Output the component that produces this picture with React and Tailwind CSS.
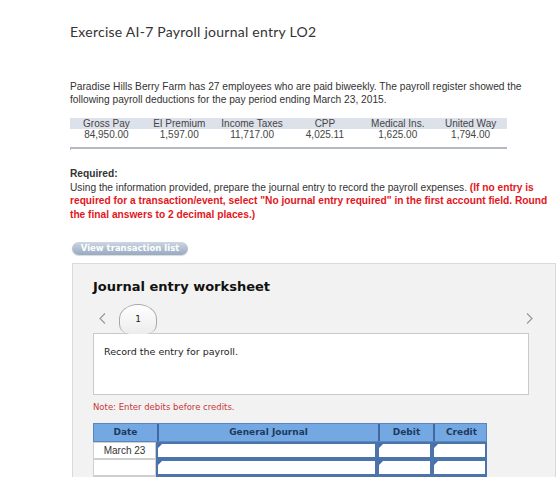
import React from "react";

const deductions = [
  { label: "Gross Pay", amount: "84,950.00" },
  { label: "EI Premium", amount: "1,597.00" },
  { label: "Income Taxes", amount: "11,717.00" },
  { label: "CPP", amount: "4,025.11" },
  { label: "Medical Ins.", amount: "1,625.00" },
  { label: "United Way", amount: "1,794.00" },
];

function InputCell() {
  return (
    <div className="relative bg-white border-2 border-[#4a74aa]">
      <span className="absolute left-0 top-0 w-0 h-0 border-t-[4px] border-t-[#3b6db0] border-r-[4px] border-r-transparent" />
    </div>
  );
}

function JournalRow({ date }) {
  return (
    <div className="grid grid-cols-[63px_221px_55px_55px] h-[17px]">
      <div className="flex items-center justify-center border border-[#cfcfcf] bg-white text-[10px] text-[#333] font-['Liberation_Sans',sans-serif]">
        {date}
      </div>
      <InputCell />
      <InputCell />
      <InputCell />
    </div>
  );
}

function Chevron({ dir }) {
  return (
    <svg width="7" height="11" viewBox="0 0 7 11" fill="none" stroke="#9a9a9a" strokeWidth="1.2">
      {dir === "left" ? <path d="M6 0.5 L1 5.5 L6 10.5" /> : <path d="M1 0.5 L6 5.5 L1 10.5" />}
    </svg>
  );
}

export default function App() {
  return (
    <div className="w-[560px] h-[477px] overflow-hidden bg-white">
      <div className="pl-[70px]">
        <h1 className="pt-[22px] h-[42px] text-[14px] leading-[20px] text-[#333] font-['Lato',sans-serif] tracking-[0.25px]">
          Exercise AI-7 Payroll journal entry LO2
        </h1>

        <p className="mt-[38px] w-[470px] text-[10.2px] leading-[13px] text-[#333] font-['Liberation_Sans',sans-serif]">
          Paradise Hills Berry Farm has 27 employees who are paid biweekly. The payroll register showed the following payroll deductions for the pay period ending March 23, 2015.
        </p>

        {/* payroll register */}
        <div className="mt-[12px] w-[437px] font-['Liberation_Sans',sans-serif] text-[10px] text-[#444]">
          <div className="grid grid-cols-6 bg-[#dde1ea] h-[11px] leading-[11px]">
            {deductions.map((d) => (
              <div key={d.label} className="text-center">{d.label}</div>
            ))}
          </div>
          <div className="grid grid-cols-6 h-[11px] leading-[11px]">
            {deductions.map((d) => (
              <div key={d.label} className="text-center">{d.amount}</div>
            ))}
          </div>
          <div className="mt-[7px] h-[3px] border-t-[2px] border-l border-[#b3b8c2]" />
        </div>

        <div className="mt-[17px] text-[10.2px] leading-[13.5px] text-[#333] font-['Liberation_Sans',sans-serif] w-[484px]">
          <div className="font-bold">Required:</div>
          <p>
            Using the information provided, prepare the journal entry to record the payroll expenses.{" "}
            <span className="font-bold text-[#e3161d]">
              (If no entry is required for a transaction/event, select "No journal entry required" in the first account field. Round the final answers to 2 decimal places.)
            </span>
          </p>
        </div>

        <button className="block mt-[21px] ml-[2px] w-[116px] h-[13px] rounded-full bg-gradient-to-b from-[#cdd6e3] to-[#98a9c1] text-white text-[8.5px] leading-[13px] font-bold font-['DejaVu_Sans',sans-serif] shadow-[0_1px_1px_rgba(0,0,0,0.15)]">
          View transaction list
        </button>

        {/* worksheet panel */}
        <div className="mt-[8px] ml-[2px] w-[484px] h-[230px] bg-[#f2f2f2] border border-[#dadada] pl-[20px] pr-[26px] font-['DejaVu_Sans',sans-serif]">
          <h2 className="mt-[15px] text-[13px] leading-[16px] font-bold text-[#111]">
            Journal entry worksheet
          </h2>

          <div className="mt-[9px] flex items-end h-[29px] relative">
            <span className="absolute left-[6px] top-[9px]">
              <Chevron dir="left" />
            </span>
            <div className="ml-[26px] -mb-px relative z-10 w-[38px] h-[30px] rounded-t-[50%] rounded-b-[10px] border border-[#a8a8a8] border-b-0 bg-gradient-to-b from-white to-[#ececec] flex items-center justify-center text-[9px] text-[#222]">
              1
            </div>
            <span className="absolute right-[-4px] top-[9px]">
              <Chevron dir="right" />
            </span>
          </div>

          <div className="h-[62px] bg-white border border-[#c9c9c9] pl-[10px] pt-[11px] text-[9.5px] text-[#222]">
            Record the entry for payroll.
          </div>

          <div className="mt-[7px] text-[8.5px] leading-[10px] text-[#c8383a]">
            Note: Enter debits before credits.
          </div>

          <div className="mt-[11px] w-[394px]">
            <div className="grid grid-cols-[63px_221px_55px_55px] h-[19px] bg-[#74a8e2] border border-[#5b86bd] text-[9px] font-bold text-[#1d3a5e]">
              <div className="flex items-center justify-center">Date</div>
              <div className="flex items-center justify-center border-l-2 border-[#3f6aa0]">General Journal</div>
              <div className="flex items-center justify-center border-l-2 border-[#3f6aa0]">Debit</div>
              <div className="flex items-center justify-center border-l-2 border-[#3f6aa0]">Credit</div>
            </div>
            <JournalRow date="March 23" />
            <JournalRow date="" />
            <JournalRow date="" />
          </div>
        </div>
      </div>
    </div>
  );
}
